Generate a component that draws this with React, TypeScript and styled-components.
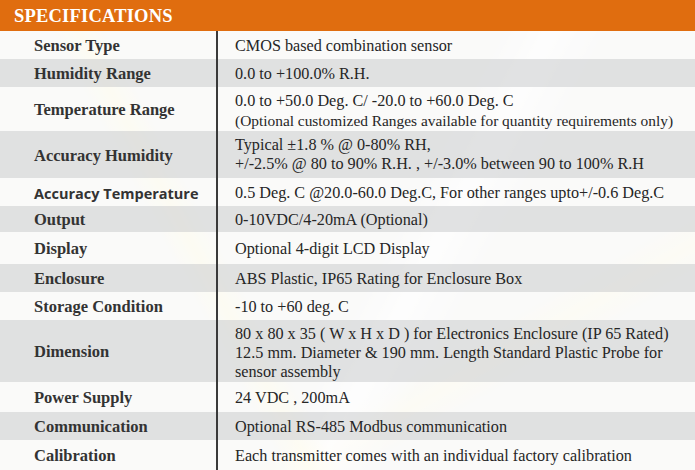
import styled, { createGlobalStyle } from 'styled-components'

const GlobalStyle = createGlobalStyle`
    html, body {
        margin: 0;
        padding: 0;
        background: #f4f4f3;
    }
    body {
        font-family: "Liberation Serif", "Times New Roman", serif;
        color: #2b2b2b;
    }
`

const Sheet = styled.section`
    width: 695px;
    height: 470px;
    overflow: hidden;
    background:
        linear-gradient(62deg, transparent 30%, rgba(255, 250, 215, 0.55) 33%, transparent 36%),
        linear-gradient(118deg, transparent 55%, rgba(255, 255, 255, 0.7) 60%, transparent 66%),
        linear-gradient(150deg, transparent 70%, rgba(255, 248, 220, 0.5) 74%, transparent 78%),
        #f3f3f2;
`

const Header = styled.h2`
    margin: 0;
    height: 31px;
    display: flex;
    align-items: center;
    padding: 1px 0 0 14px;
    box-sizing: border-box;
    background: #e06d0f;
    color: #fff;
    font-size: 18.5px;
    font-weight: bold;
    letter-spacing: 0.2px;
`

const Row = styled.div<{ $h: number; $shade: boolean }>`
    display: grid;
    grid-template-columns: 218px 1fr;
    height: ${(p) => p.$h}px;
    background: ${(p) => (p.$shade ? 'rgba(218, 219, 221, 0.78)' : 'rgba(255, 255, 255, 0.55)')};
`

const Label = styled.div<{ $sans?: boolean }>`
    display: flex;
    align-items: center;
    padding: 2px 0 0 34px;
    border-right: 2px solid #3a3a3a;
    font-weight: bold;
    font-size: ${(p) => (p.$sans ? '14.5px' : '16.5px')};
    font-family: ${(p) => (p.$sans ? '"Open Sans", "Liberation Sans", sans-serif' : 'inherit')};
    color: #333;
`

const Value = styled.div<{ $top?: boolean }>`
    display: flex;
    flex-direction: column;
    justify-content: ${(p) => (p.$top ? 'flex-start' : 'center')};
    padding: ${(p) => (p.$top ? '5px 0 0 17px' : '2px 0 0 17px')};
    font-size: 16.2px;
    line-height: 19px;
    color: #262626;
    white-space: nowrap;
`

const Line = styled.span<{ $size?: number }>`
    font-size: ${(p) => (p.$size ? `${p.$size}px` : 'inherit')};
`

type Spec = {
    label: string
    h: number
    lines: string[]
    top?: boolean
    sans?: boolean
    size?: number
}

const specs: Spec[] = [
    { label: 'Sensor Type', h: 28, lines: ['CMOS based combination sensor'] },
    { label: 'Humidity Range', h: 28, lines: ['0.0 to +100.0% R.H.'] },
    {
        label: 'Temperature Range',
        h: 44,
        top: true,
        lines: [
            '0.0 to +50.0 Deg. C/ -20.0 to +60.0 Deg. C',
            '(Optional customized Ranges available for quantity requirements only)',
        ],
        size: 15.4,
    },
    {
        label: 'Accuracy Humidity',
        h: 47,
        top: true,
        lines: ['Typical ±1.8 % @ 0-80% RH,', '+/-2.5% @ 80 to 90% R.H. , +/-3.0% between 90 to 100% R.H'],
    },
    {
        label: 'Accuracy Temperature',
        h: 28,
        sans: true,
        lines: ['0.5 Deg. C @20.0-60.0 Deg.C, For other ranges upto+/-0.6 Deg.C'],
        size: 16.2,
    },
    { label: 'Output', h: 26, lines: ['0-10VDC/4-20mA (Optional)'] },
    { label: 'Display', h: 32, lines: ['Optional 4-digit LCD Display'] },
    { label: 'Enclosure', h: 28, lines: ['ABS Plastic, IP65 Rating for Enclosure Box'] },
    { label: 'Storage Condition', h: 28, lines: ['-10 to +60 deg. C'] },
    {
        label: 'Dimension',
        h: 62,
        top: true,
        lines: [
            '80 x 80 x 35 ( W x H x D ) for Electronics Enclosure (IP 65 Rated)',
            '12.5 mm. Diameter & 190 mm. Length Standard Plastic Probe for',
            'sensor assembly',
        ],
    },
    { label: 'Power Supply', h: 30, lines: ['24 VDC , 200mA'] },
    { label: 'Communication', h: 28, lines: ['Optional RS-485 Modbus communication'] },
    { label: 'Calibration', h: 30, lines: ['Each transmitter comes with an individual factory calibration'] },
]

const App = () => {
    return (
        <Sheet>
            <GlobalStyle />
            <Header>SPECIFICATIONS</Header>

            {specs.map((spec, i) => (
                <Row $h={spec.h} $shade={i % 2 === 1} key={spec.label}>
                    <Label $sans={spec.sans}>{spec.label}</Label>
                    <Value $top={spec.top}>
                        {spec.lines.map((line, j) => (
                            <Line $size={j === 1 || spec.lines.length === 1 ? spec.size : undefined} key={line}>
                                {line}
                            </Line>
                        ))}
                    </Value>
                </Row>
            ))}
        </Sheet>
    )
}

export default App
